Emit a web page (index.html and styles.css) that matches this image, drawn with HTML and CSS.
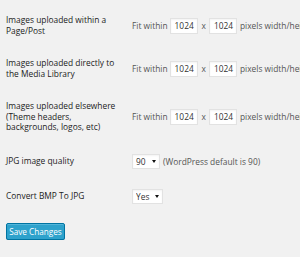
FILE: index.html
```html
<!DOCTYPE html>
<html lang="en">
<head>
    <meta charset="UTF-8">
    <title>Image settings</title>
    <link rel="stylesheet" href="styles.css">
</head>
<body>

    <form class="settings">
        <div class="form-row">
            <div class="row-label">Images uploaded within a Page/Post</div>
            <div class="row-field">
                Fit within
                <input type="text" class="size-input" value="1024">
                <span class="times">x</span>
                <input type="text" class="size-input" value="1024">
                pixels width/height
            </div>
        </div>

        <div class="form-row">
            <div class="row-label">Images uploaded directly to the Media Library</div>
            <div class="row-field">
                Fit within
                <input type="text" class="size-input" value="1024">
                <span class="times">x</span>
                <input type="text" class="size-input" value="1024">
                pixels width/height
            </div>
        </div>

        <div class="form-row">
            <div class="row-label">Images uploaded elsewhere (Theme headers, backgrounds, logos, etc)</div>
            <div class="row-field">
                Fit within
                <input type="text" class="size-input" value="1024">
                <span class="times">x</span>
                <input type="text" class="size-input" value="1024">
                pixels width/height
            </div>
        </div>

        <div class="form-row">
            <div class="row-label">JPG image quality</div>
            <div class="row-field">
                <span class="select-box">
                    <select class="small-select">
                        <option>90</option>
                    </select>
                    <span class="arrow"></span>
                </span>
                <span class="hint">(WordPress default is 90)</span>
            </div>
        </div>

        <div class="form-row">
            <div class="row-label">Convert BMP To JPG</div>
            <div class="row-field">
                <span class="select-box wide">
                    <select class="small-select">
                        <option>Yes</option>
                    </select>
                    <span class="arrow"></span>
                </span>
            </div>
        </div>

        <div class="submit">
            <button type="button" class="button-primary">Save Changes</button>
        </div>
    </form>

</body>
</html>
```

FILE: styles.css
```css
html, body {
    overflow: hidden;
}

body {
    font-family: 'Open Sans', sans-serif;
    font-size: 8.4px;
    background: #f1f1f1;
    color: #222;
    margin: 0;
    padding: 4px 0 0 6px;
}

.form-row {
    display: flex;
    align-items: center;
}

.row-label {
    width: 118px;
    flex-shrink: 0;
    padding: 11px 8px 11px 0;
    line-height: 10.5px;
}

.row-field {
    display: flex;
    align-items: center;
    padding: 10px 0;
    white-space: nowrap;
    color: #555;
}

.size-input {
    width: 28px;
    height: 16px;
    box-sizing: border-box;
    margin: 0 3px 0 2px;
    padding: 0 0 0 4px;
    font-family: inherit;
    font-size: 8.4px;
    color: #333;
    background: #fff;
    border: 1px solid #e2e2e2;
    box-shadow: inset 0 1px 2px rgba(0, 0, 0, 0.05);
    outline: none;
}

.times {
    margin: 0 1px 0 1px;
}

.select-box {
    position: relative;
    display: inline-block;
    width: 28px;
    height: 15px;
    margin-right: 3px;
}

.select-box.wide {
    width: 31px;
}

.small-select {
    appearance: none;
    width: 100%;
    height: 100%;
    box-sizing: border-box;
    margin: 0;
    padding: 0 0 0 3px;
    font-family: inherit;
    font-size: 8.4px;
    color: #333;
    background: #fff;
    border: 1px solid #e2e2e2;
    border-radius: 0;
    box-shadow: inset 0 1px 2px rgba(0, 0, 0, 0.05);
}

.arrow {
    position: absolute;
    right: 4px;
    top: 6px;
    width: 0;
    height: 0;
    border-left: 2.5px solid transparent;
    border-right: 2.5px solid transparent;
    border-top: 3.5px solid #111;
    pointer-events: none;
}

.hint {
    color: #555;
}

.submit {
    padding-top: 9.5px;
}

.button-primary {
    font-family: inherit;
    font-size: 8.2px;
    color: #fff;
    background: #2ea2cc;
    border: 1px solid #0074a2;
    border-radius: 2px;
    box-shadow: inset 0 1px 0 rgba(120, 200, 230, 0.5), 0 1px 0 rgba(0, 0, 0, 0.15);
    width: 59px;
    height: 17px;
    padding: 0;
    cursor: pointer;
}
```
